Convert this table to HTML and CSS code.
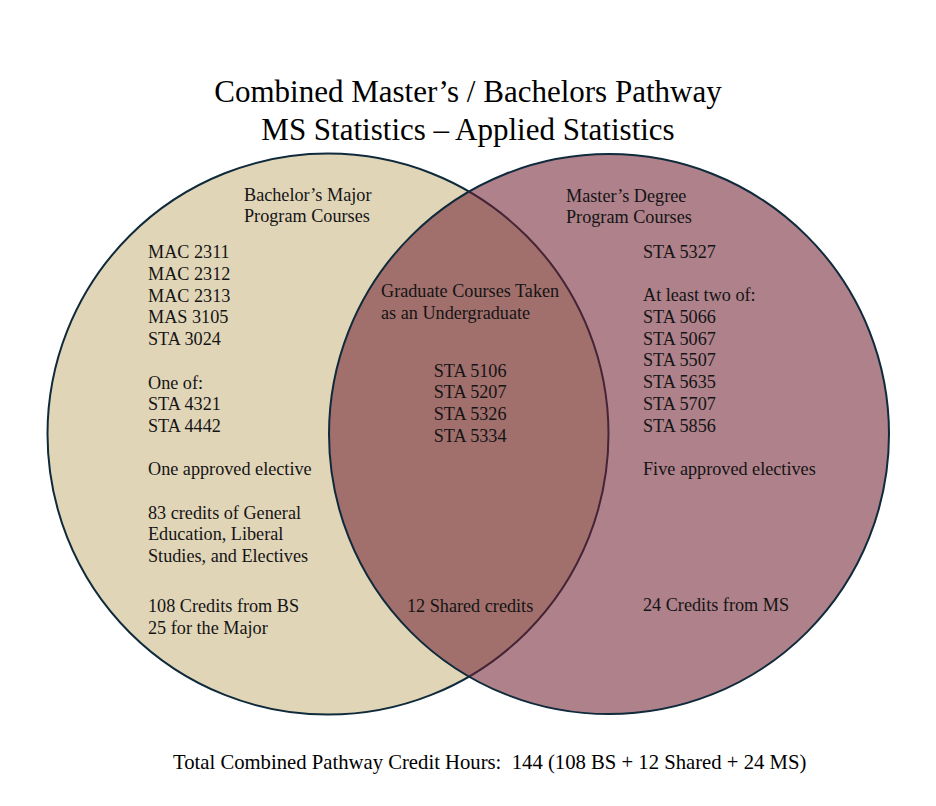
FILE: index.html
```html
<!DOCTYPE html>
<html lang="en">
<head>
<meta charset="utf-8">
<title>Combined Master's / Bachelors Pathway</title>
<link rel="stylesheet" href="styles.css">
</head>
<body>
<main class="page">
  <h1 class="title">Combined Master’s / Bachelors Pathway<br>MS Statistics – Applied Statistics</h1>

  <section class="venn">
    <svg class="circles" width="936" height="572" viewBox="0 0 936 572" aria-hidden="true">
      <circle cx="328" cy="286.1" r="280.5" class="c-bs"/>
      <circle cx="609" cy="286.1" r="280" class="c-ms"/>
    </svg>

    <div class="col col-bs">
      <p class="head">Bachelor’s Major<br>Program Courses</p>
      <div class="list">
        <p class="group">MAC 2311<br>MAC 2312<br>MAC 2313<br>MAS 3105<br>STA 3024</p>
        <p class="group">One of:<br>STA 4321<br>STA 4442</p>
        <p class="group">One approved elective</p>
        <p class="group">83 credits of General<br>Education, Liberal<br>Studies, and Electives</p>
      </div>
      <p class="foot">108 Credits from BS<br>25 for the Major</p>
    </div>

    <div class="col col-shared">
      <p class="head">Graduate Courses Taken<br>as an Undergraduate</p>
      <p class="list">STA 5106<br>STA 5207<br>STA 5326<br>STA 5334</p>
      <p class="foot">12 Shared credits</p>
    </div>

    <div class="col col-ms">
      <p class="head">Master’s Degree<br>Program Courses</p>
      <div class="list">
        <p class="group">STA 5327</p>
        <p class="group">At least two of:<br>STA 5066<br>STA 5067<br>STA 5507<br>STA 5635<br>STA 5707<br>STA 5856</p>
        <p class="group">Five approved electives</p>
      </div>
      <p class="foot">24 Credits from MS</p>
    </div>
  </section>

  <p class="total">Total Combined Pathway Credit Hours:&nbsp; 144 (108 BS + 12 Shared + 24 MS)</p>
</main>
</body>
</html>
```

FILE: styles.css
```css
html, body {
  margin: 0;
  padding: 0;
  background: #ffffff;
}

body {
  font-family: "Liberation Serif", "Times New Roman", serif;
  color: #141414;
}

.page {
  width: 936px;
  height: 806px;
  overflow: hidden;
}

p {
  margin: 0;
}

.title {
  margin: 0;
  padding-top: 73px;
  font-weight: normal;
  font-size: 31px;
  line-height: 37.7px;
  text-align: center;
  color: #000000;
}

.venn {
  position: relative;
  height: 571.6px;
  display: grid;
  grid-template-columns: 233px 185px 1fr;
  padding-left: 148px;
  box-sizing: border-box;
  font-size: 18.2px;
  line-height: 21.7px;
}

.circles {
  position: absolute;
  left: 0;
  top: 0;
}

.c-bs {
  fill: #e1d5b8;
  stroke: #0f2a3b;
  stroke-width: 2;
}

.c-ms {
  fill: rgba(112, 32, 50, 0.565);
  stroke: #0f2a3b;
  stroke-width: 2;
}

.col {
  position: relative;
  display: flex;
  flex-direction: column;
  align-items: flex-start;
}

.group + .group {
  margin-top: 21.7px;
}

/* Bachelor's column */
.col-bs .head {
  margin-top: 36.3px;
  margin-left: 96px;
}

.col-bs .list {
  margin-top: 14.2px;
}

.col-bs .foot {
  margin-top: 28.2px;
}

/* Shared column */
.col-shared {
  width: max-content;
  align-items: stretch;
}

.col-shared .head {
  margin-top: 132.6px;
}

.col-shared .list {
  margin-top: 36.1px;
  text-align: center;
}

.col-shared .foot {
  margin-top: 149px;
  text-align: center;
}

/* Master's column */
.col-ms .head {
  margin-top: 37.2px;
}

.col-ms .list {
  margin-top: 12.9px;
  margin-left: 77px;
}

.col-ms .foot {
  margin-top: 114px;
  margin-left: 77px;
}

.total {
  margin-top: 30.4px;
  padding-left: 173px;
  font-size: 20.7px;
  line-height: 24px;
  color: #000000;
}
```
